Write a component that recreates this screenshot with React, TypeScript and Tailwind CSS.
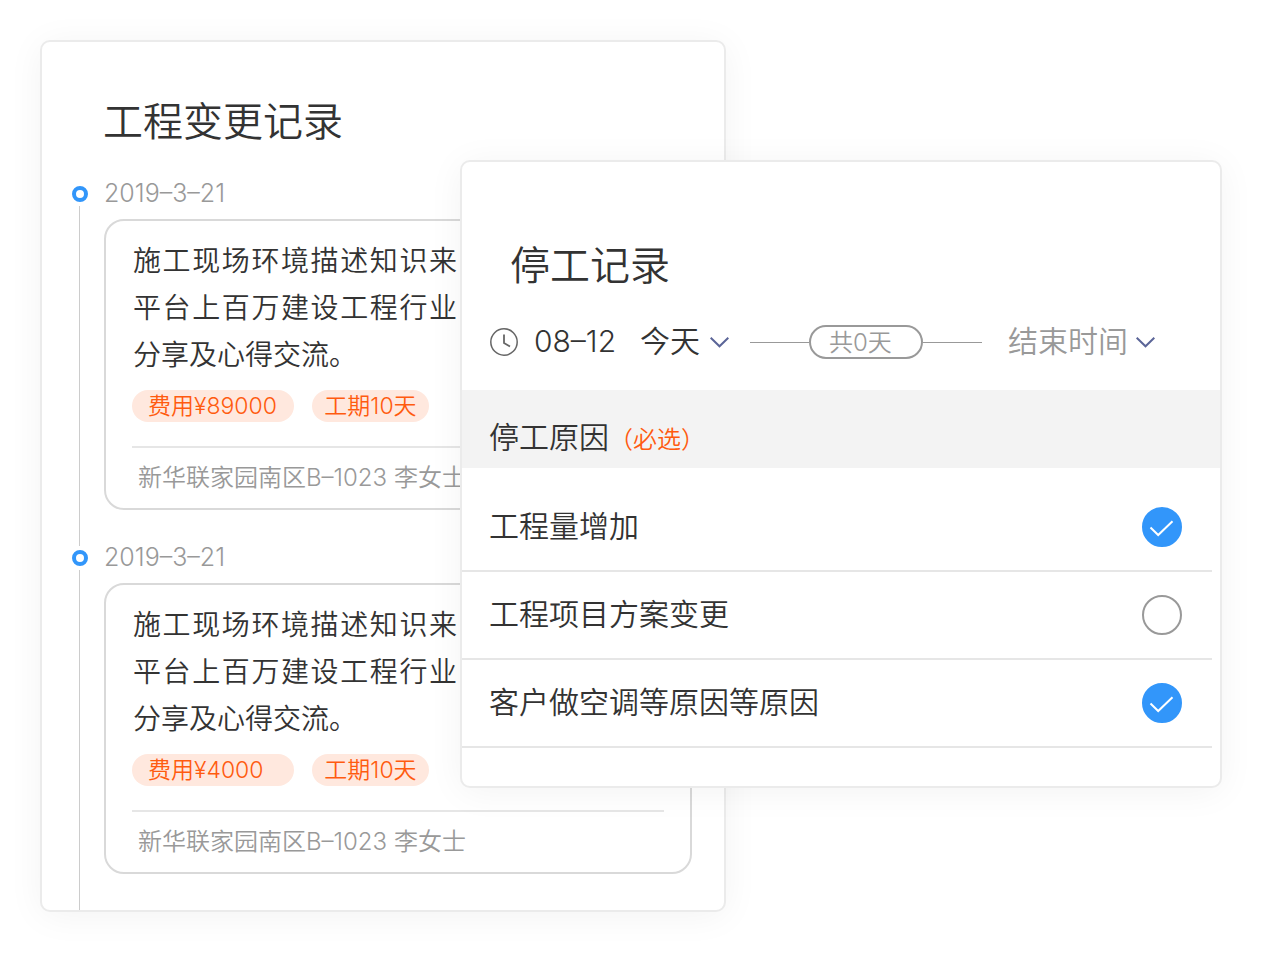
type ChangeRecord = { id: number; date: string; cost: string; days: string; address: string };

const records: ChangeRecord[] = [
  { id: 1, date: '2019–3–21', cost: '费用¥89000', days: '工期10天', address: '新华联家园南区B–1023 李女士' },
  { id: 2, date: '2019–3–21', cost: '费用¥4000', days: '工期10天', address: '新华联家园南区B–1023 李女士' },
];

const reasons = [
  { id: 'quantity', label: '工程量增加', checked: true },
  { id: 'plan', label: '工程项目方案变更', checked: false },
  { id: 'customer', label: '客户做空调等原因等原因', checked: true },
];

function Chevron() {
  return (
    <svg className="h-3 w-5 shrink-0" viewBox="0 0 20 12" fill="none" stroke="#5b6598" strokeWidth="2" aria-hidden="true">
      <path d="M0.7 1.7 L9.5 10.3 L18.3 1.7" />
    </svg>
  );
}

function RecordItem({ record }: { record: ChangeRecord }) {
  return (
    <li className="flex h-[364px] gap-4">
      <div className="flex w-4 shrink-0 flex-col">
        <div className="flex h-6 shrink-0 items-center">
          <span className="size-4 rounded-full border-4 border-[#3296fa] bg-white" />
        </div>
        <div className="ml-[7px] w-px grow bg-[#cccccc]" />
      </div>
      <div className="min-w-0 grow">
        <time className="block text-[25px] leading-[22px] text-[#999999]">{record.date}</time>
        <article className="mt-[15px] rounded-[20px] border-2 border-[#d9d9d9] px-[26px] pt-[17px]">
          <p className="w-[325px] pl-px text-justify text-[28px] leading-[47px] text-[#333333]">
            施工现场环境描述知识来平台上百万建设工程行业分享及心得交流。
          </p>
          <div className="mt-[11px] flex gap-[18px] text-[23px] leading-8 whitespace-nowrap text-[#ff5b0f]">
            <span className="w-[162px] rounded-full bg-[#ffe8de] pl-4">{record.cost}</span>
            <span className="w-[117px] rounded-full bg-[#ffe8de] text-center">{record.days}</span>
          </div>
          <div className="mt-6 border-t-2 border-[#e6e6e6] pl-1.5 text-2xl leading-[60px] whitespace-nowrap text-[#999999]">
            {record.address}
          </div>
        </article>
      </div>
    </li>
  );
}

export default function App() {
  return (
    <main className="grid min-h-screen grid-cols-[420fr_266fr_496fr] items-start bg-white py-10 pr-[42px] pl-10 font-['Inter','Noto_Sans_CJK_SC',sans-serif] font-[350]">
      <section className="col-span-2 col-start-1 row-start-1 rounded-[10px] border-2 border-[#ebebeb] bg-white pt-[50px] pr-8 pl-[30px] shadow-[0_4px_36px_rgba(0,0,0,0.05)]">
        <h1 className="pl-[31px] text-[40px] leading-[60px] text-[#333333]">工程变更记录</h1>
        <ul className="mt-[30px]">
          {records.map((record) => (
            <RecordItem key={record.id} record={record} />
          ))}
        </ul>
      </section>

      <section className="z-10 col-span-2 col-start-2 row-start-1 mt-[120px] rounded-[10px] border-2 border-[#ebebeb] bg-white pt-[74px] pb-[38px] text-[30px] text-[#333333] shadow-[0_4px_36px_rgba(0,0,0,0.05)]">
        <h2 className="pl-12 text-[40px] leading-[60px]">停工记录</h2>
        <div className="mt-[26px] flex h-10 items-center pr-16 pl-7 leading-10 whitespace-nowrap">
          <svg className="size-7 shrink-0" viewBox="0 0 28 28" fill="none" stroke="#666666" aria-hidden="true">
            <circle cx="14" cy="14" r="13.2" strokeWidth="1.5" />
            <path d="M14 6.5 V15 L20 18.6" strokeWidth="1.8" />
          </svg>
          <button type="button" className="ml-4 flex items-center">
            <span className="pb-0.5">08–12</span>
            <span className="ml-6 pb-0.5">今天</span>
            <span className="ml-2.5 flex"><Chevron /></span>
          </button>
          <div className="ml-5 flex grow items-center text-2xl text-[#999999]">
            <span className="h-px grow bg-[#999999]" />
            <span className="h-[34px] w-[114px] rounded-full border-2 border-[#999999] pl-[18px] leading-8">共0天</span>
            <span className="h-px grow bg-[#999999]" />
          </div>
          <button type="button" className="ml-[26px] flex items-center text-[#999999]">
            <span className="pb-0.5">结束时间</span>
            <span className="ml-2 flex"><Chevron /></span>
          </button>
        </div>
        <fieldset className="mt-7">
          <legend className="flex h-[78px] w-full items-baseline bg-[#f3f3f3] pt-[25px] pl-[27px]">
            停工原因
            <span className="text-2xl text-[#ff5b0f]">（必选）</span>
          </legend>
          <div className="pt-4 pr-2">
            {reasons.map((reason) => (
              <label key={reason.id} className="flex h-[88px] items-center justify-between border-b-2 border-[#e6e6e6] pr-[30px] pl-[27px]">
                <span className="pb-0.5">{reason.label}</span>
                <span className="grid">
                  <input
                    type="checkbox"
                    defaultChecked={reason.checked}
                    className="peer size-10 appearance-none rounded-full border-2 border-[#999999] [grid-area:1/1] checked:border-[#3296fa] checked:bg-[#3296fa]"
                  />
                  <svg className="pointer-events-none hidden size-10 [grid-area:1/1] peer-checked:block" viewBox="0 0 40 40" fill="none" stroke="white" strokeWidth="2" aria-hidden="true">
                    <path d="M8.5 20.5 L16.2 28 L30.5 14.3" />
                  </svg>
                </span>
              </label>
            ))}
          </div>
        </fieldset>
      </section>
    </main>
  );
}
